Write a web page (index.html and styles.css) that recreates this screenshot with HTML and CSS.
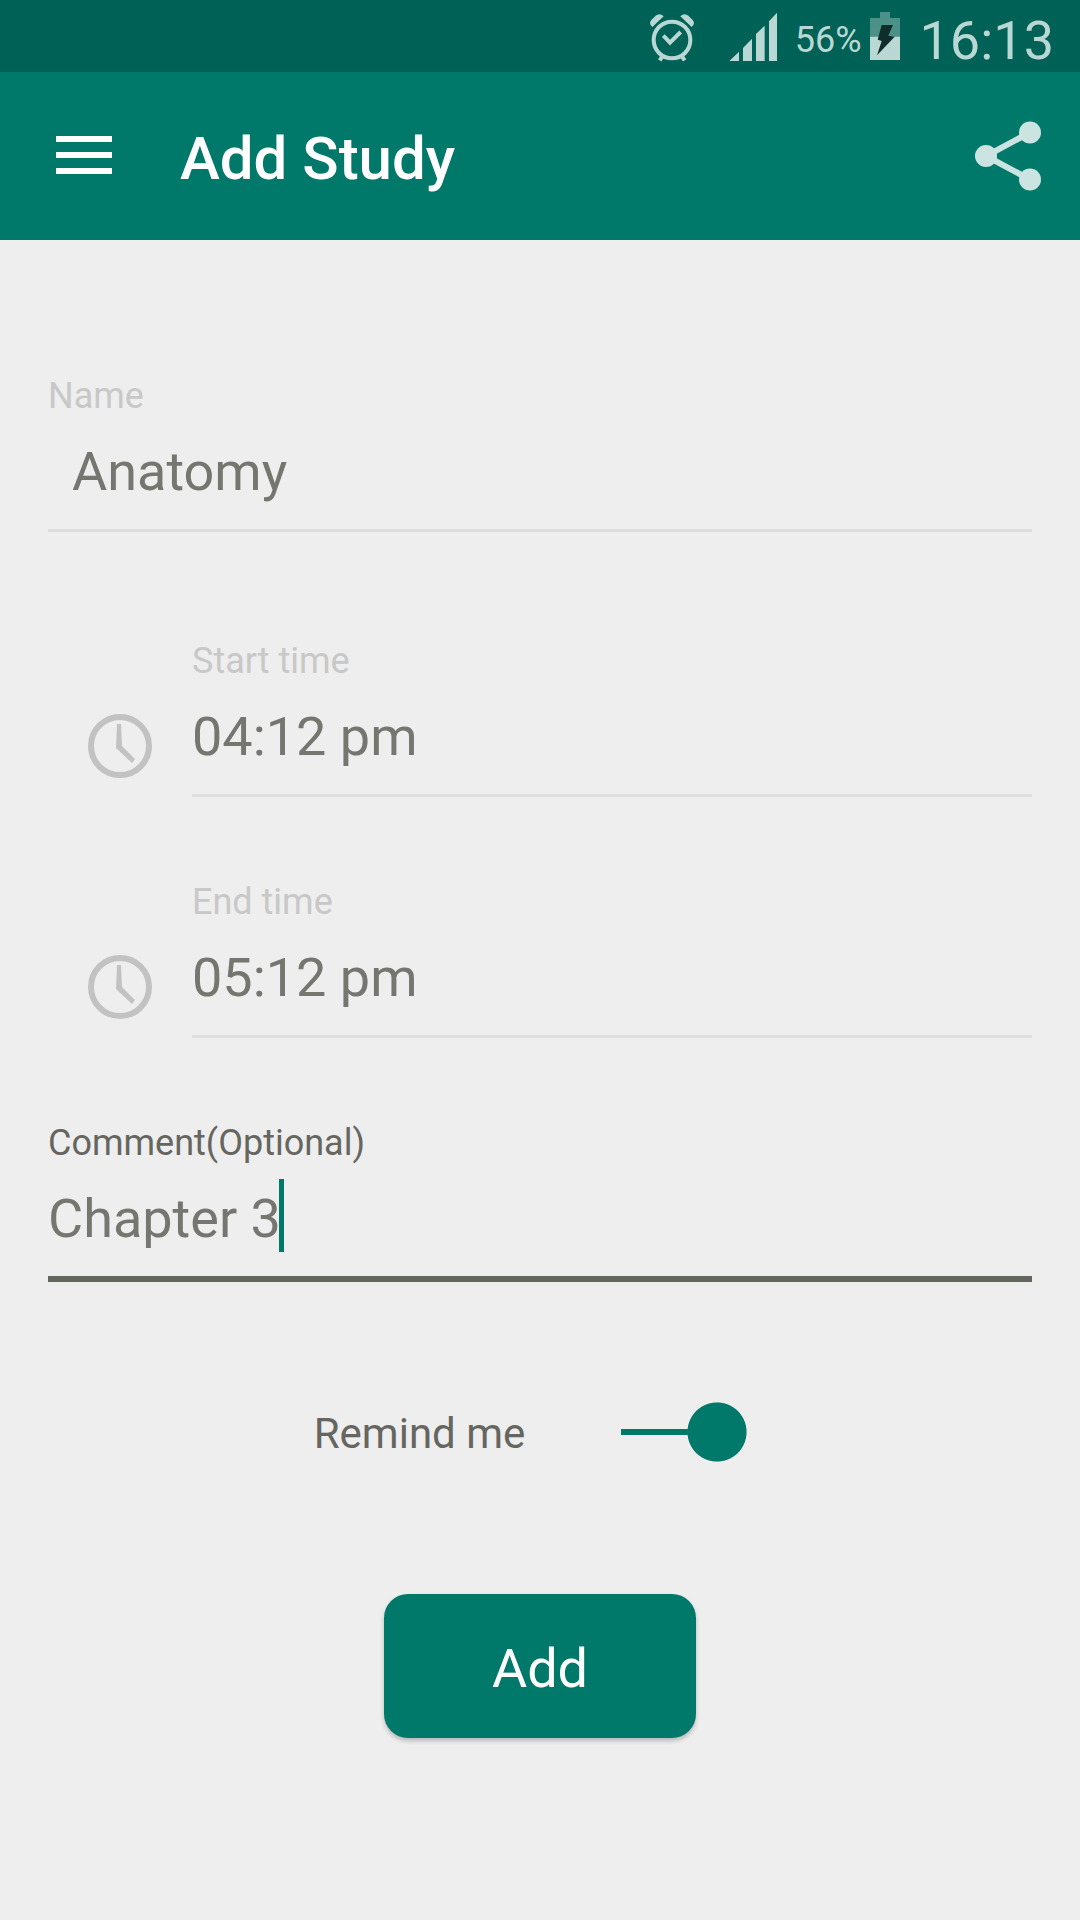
FILE: index.html
```html
<!DOCTYPE html>
<html lang="en">
<head>
<meta charset="utf-8">
<meta name="viewport" content="width=device-width, initial-scale=1">
<title>Add Study</title>
<link rel="stylesheet" href="styles.css">
</head>
<body>
<div class="status-bar">
  <svg class="status-alarm" viewBox="60 36 141 150" aria-hidden="true">
    <circle cx="129" cy="120" r="55" fill="none" stroke="currentColor" stroke-width="12"/>
    <path d="M103 107l20 21 32-32M101 168l-9 13M158 168l9 13" fill="none" stroke="currentColor" stroke-width="12"/>
    <path d="M70 81Q58 70 67 60L80 47Q92 37 104 49ZM188 81Q200 70 191 60L178 47Q166 37 154 49Z" fill="currentColor"/>
  </svg>
  <svg class="status-signal" viewBox="300 36 144 150" aria-hidden="true">
    <path d="M301 183l29-28v28zM342 183v-39l27-28v67zM381 183v-81l26-25v106zM420 183V64l24-26v145z" fill="currentColor"/>
  </svg>
  <span class="status-percent">56%</span>
  <svg class="status-battery" viewBox="723 36 90 150" aria-hidden="true">
    <path d="M753 36h30v18h30v56h-90V54h30z" fill="#4c9187"/>
    <path d="M723 110h90v70h-90z" fill="currentColor"/>
    <path d="M758 75h34l-14 32 19 3-53 56 14-43-12-4z" fill="#102d2b"/>
  </svg>
  <time class="status-time">16:13</time>
</div>

<header class="app-bar">
  <button class="icon-button menu-button" type="button" aria-label="Menu">
    <svg class="menu-icon" viewBox="0 0 56 40"><path d="M0 3h56M0 19h56M0 35h56" stroke="currentColor" stroke-width="6"/></svg>
  </button>
  <h1 class="app-title">Add Study</h1>
  <button class="icon-button share-button" type="button" aria-label="Share">
    <svg class="share-icon" viewBox="0 0 66 70">
      <path d="M55 11.500L11 35l44 23.500" fill="none" stroke="currentColor" stroke-width="6"/>
      <circle cx="11" cy="35" r="11" fill="currentColor"/>
      <circle cx="55" cy="11.500" r="11" fill="currentColor"/>
      <circle cx="55" cy="58.500" r="11" fill="currentColor"/>
    </svg>
  </button>
</header>

<main>
  <form class="study-form">
    <div class="field field-name">
      <label class="field-label" for="name">Name</label>
      <input class="field-input input-indented" id="name" type="text" value="Anatomy">
    </div>

    <div class="times">
      <div class="time-row">
        <svg class="clock-icon" viewBox="0 0 64 64" aria-hidden="true">
          <circle cx="32" cy="32" r="29" fill="none" stroke="currentColor" stroke-width="6"/>
          <path d="M29 10h4l1 22 13 13-3 4-16-15z" fill="currentColor"/>
        </svg>
        <div class="field">
          <label class="field-label" for="start">Start time</label>
          <input class="field-input" id="start" type="text" value="04:12 pm">
        </div>
      </div>
      <div class="time-row">
        <svg class="clock-icon" viewBox="0 0 64 64" aria-hidden="true">
          <circle cx="32" cy="32" r="29" fill="none" stroke="currentColor" stroke-width="6"/>
          <path d="M29 10h4l1 22 13 13-3 4-16-15z" fill="currentColor"/>
        </svg>
        <div class="field">
          <label class="field-label" for="end">End time</label>
          <input class="field-input" id="end" type="text" value="05:12 pm">
        </div>
      </div>
    </div>

    <div class="field field-active">
      <label class="field-label" for="comment">Comment(Optional)</label>
      <input class="field-input" id="comment" type="text" value="Chapter 3">
      <span class="caret"></span>
    </div>

    <div class="remind-row">
      <label class="remind-label" for="remind">Remind me</label>
      <input class="switch" id="remind" type="checkbox" role="switch" checked>
    </div>

    <button class="add-button" type="button">Add</button>
  </form>
</main>
</body>
</html>
```

FILE: styles.css
```css
* {
  box-sizing: border-box;
}

body {
  margin: 0;
  min-height: 100vh;
  background: #eeeeee;
  color: #65665f;
  font-family: Roboto, sans-serif;
}

input,
button {
  margin: 0;
  padding: 0;
  border: 0;
  background: none;
  color: inherit;
  font: inherit;
}

svg {
  display: block;
  flex: none;
}

/* Status bar */
.status-bar {
  display: flex;
  justify-content: flex-end;
  align-items: flex-start;
  height: 72px;
  padding: 12px 26px 0;
  background: #006156;
  color: #b9d8d4;
}

.status-alarm {
  width: 47px;
  height: 50px;
  margin-right: 33px;
}

.status-signal {
  width: 48px;
  height: 50px;
  margin-right: 18px;
}

.status-percent {
  margin-right: 8px;
  padding-top: 7px;
  font-size: 36px;
  line-height: 42px;
}

.status-battery {
  width: 30px;
  height: 50px;
  margin-right: 20px;
}

.status-time {
  font-size: 54px;
  line-height: 58px;
}

/* App bar */
.app-bar {
  display: flex;
  align-items: center;
  height: 168px;
  padding: 0 39px 0 56px;
  background: #00796b;
  color: #ffffff;
}

.icon-button {
  flex: none;
}

.menu-icon {
  width: 56px;
  height: 40px;
}

.app-title {
  flex: 1;
  margin: 0;
  padding: 6px 0 0 68px;
  font-size: 60px;
  font-weight: 500;
  line-height: 70px;
}

.share-button {
  color: #cce4e1;
}

.share-icon {
  width: 66px;
  height: 70px;
}

/* Form */
.study-form {
  display: flex;
  flex-direction: column;
  padding: 134px 48px 48px;
}

.field {
  position: relative;
  display: flex;
  flex: 1;
  flex-direction: column;
  gap: 22px;
}

.field-name {
  margin-bottom: 107px;
}

.field-label {
  color: #c8c8c8;
  font-size: 36px;
  line-height: 44px;
}

.field-input {
  box-sizing: content-box;
  height: 64px;
  padding-bottom: 25px;
  border-bottom: 3px solid #dcdddd;
  border-radius: 0;
  outline: none;
  color: #757670;
  font-size: 54px;
  line-height: 64px;
}

.input-indented {
  padding-left: 24px;
}

.times {
  display: flex;
  flex-direction: column;
  gap: 83px;
  margin-bottom: 83px;
}

.time-row {
  display: flex;
  align-items: flex-end;
  gap: 40px;
  padding-left: 40px;
}

.clock-icon {
  width: 64px;
  height: 64px;
  margin-bottom: 19px;
  color: #c2c2c2;
}

.field-active .field-label {
  color: #65665f;
}

.field-active .field-input {
  border-bottom: 6px solid #62675e;
}

.caret {
  position: absolute;
  top: 58px;
  left: 231px;
  width: 5px;
  height: 73px;
  background: #00796b;
}

/* Reminder switch */
.remind-row {
  display: flex;
  justify-content: center;
  align-items: center;
  gap: 96px;
  margin-top: 120px;
  padding-right: 19px;
}

.remind-label {
  padding-top: 4px;
  font-size: 42px;
  line-height: 54px;
}

.switch {
  appearance: none;
  width: 126px;
  height: 60px;
  background:
    radial-gradient(circle closest-side, #00796b 97%, transparent) right center / 60px 60px no-repeat,
    linear-gradient(#00796b, #00796b) left center / 90px 6px no-repeat;
}

.switch:not(:checked) {
  transform: rotate(180deg);
}

.add-button {
  align-self: center;
  width: 312px;
  height: 144px;
  margin-top: 132px;
  padding-top: 4px;
  border-radius: 24px;
  background: #00796b;
  box-shadow: 0 3px 4px rgba(0, 0, 0, 0.22);
  color: #ffffff;
  font-size: 54px;
}
```
